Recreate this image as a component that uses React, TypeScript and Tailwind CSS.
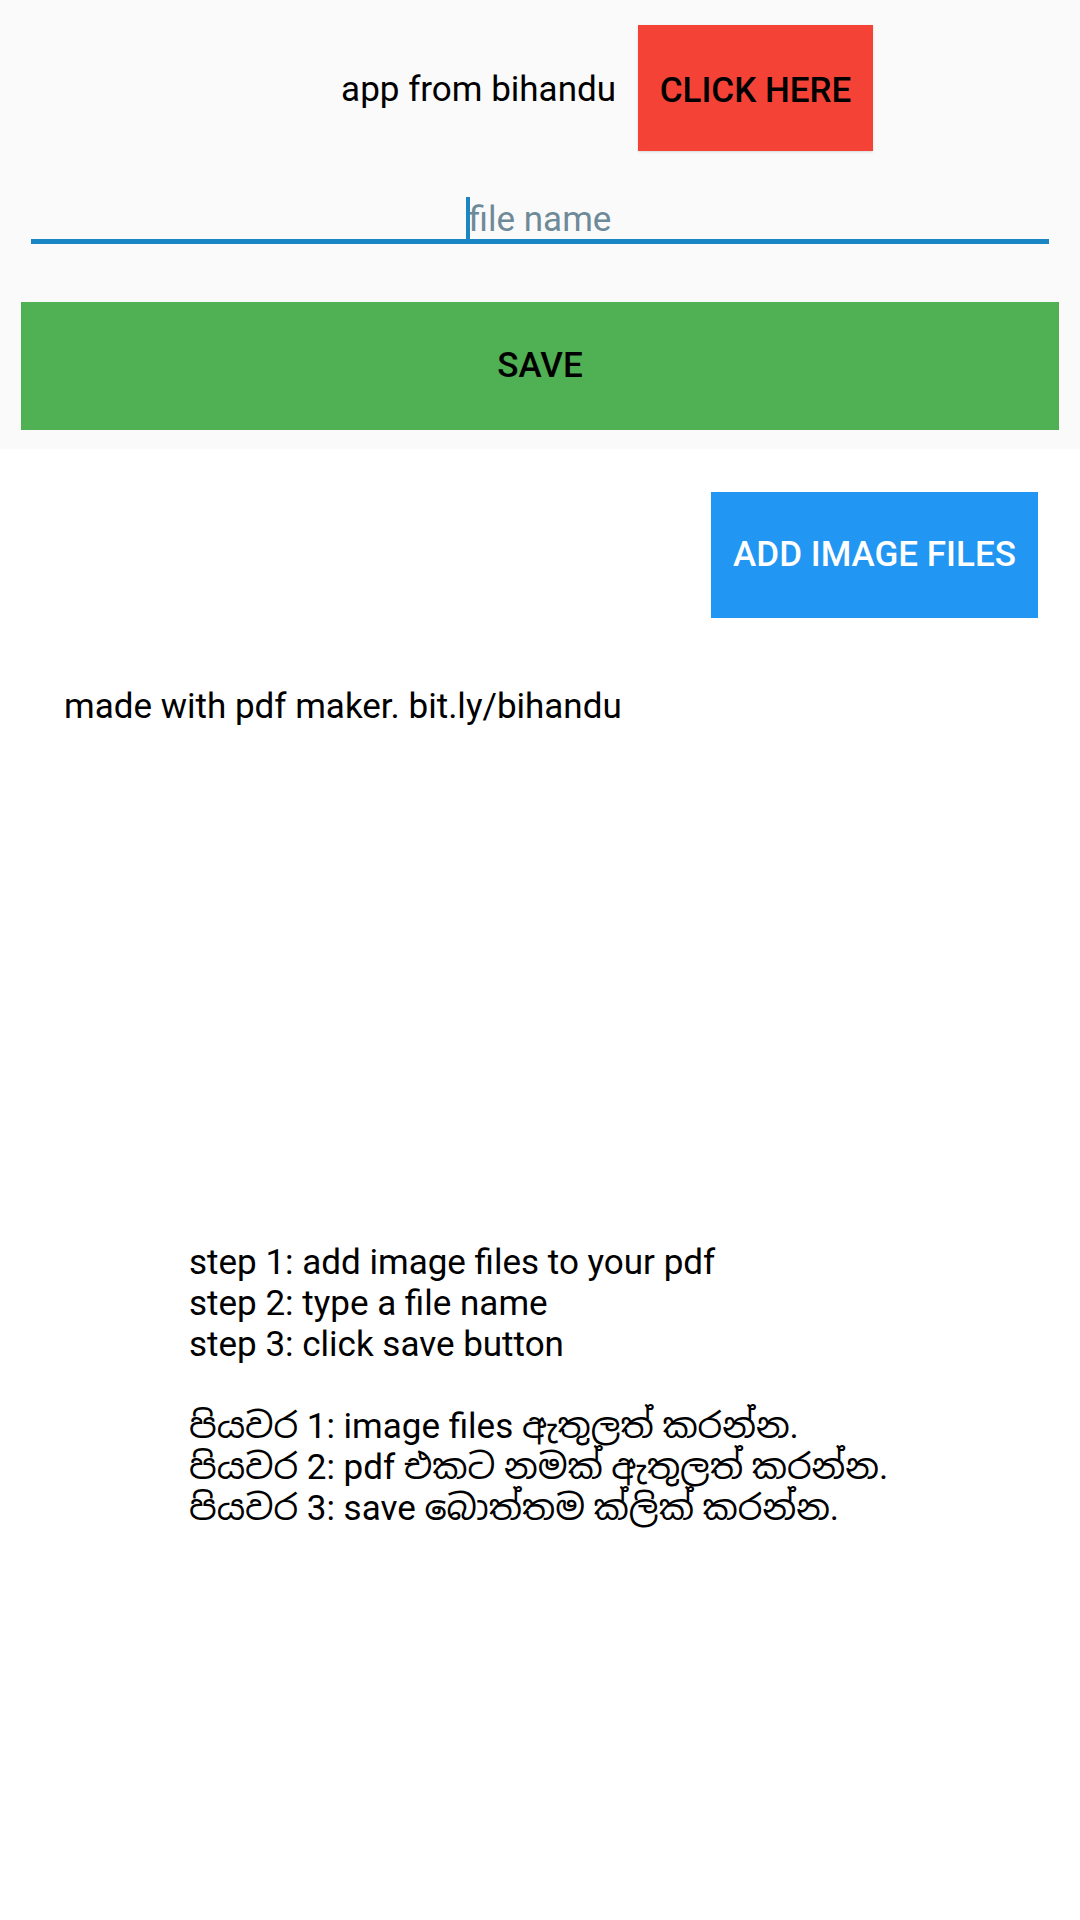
export default function App() {
  return (
    <div className="w-[1080px] h-[1920px] bg-white font-['Roboto','Noto_Sans','Noto_Sans_Sinhala',sans-serif] text-black">
      {/* top form */}
      <div className="bg-[#fafafa] h-[449px] pt-[25px]">
        <div className="flex items-center justify-end pr-[207px] gap-[22px]">
          <span className="text-[35px] leading-none pt-[2px]">app from bihandu</span>
          <button className="w-[235px] h-[126px] bg-[#f44336] text-[35px] font-medium uppercase shadow-sm pt-[6px]">
            CLICK HERE
          </button>
        </div>

        <div className="mx-[31px] mt-[13px] relative h-[80px] border-b-[5px] border-[#1a86c4] flex items-end justify-center">
          <div className="relative flex items-end pb-[2px]">
            <span className="absolute left-[-3px] bottom-[-4px] w-[4px] h-[46px] bg-[#1a86c4]" />
            <span className="text-[35px] leading-none text-[#6e8a98]">file name</span>
          </div>
        </div>

        <button className="mt-[58px] mx-[21px] w-[1038px] h-[128px] bg-[#50b054] text-[35px] font-medium">
          SAVE
        </button>
      </div>

      {/* add files */}
      <div className="flex justify-end pr-[42px] pt-[43px]">
        <button className="w-[327px] h-[126px] bg-[#2196f3] text-white text-[35px] font-medium">
          ADD IMAGE FILES
        </button>
      </div>

      <p className="pl-[64px] mt-[68px] text-[35px] leading-[41px]">made with pdf maker. bit.ly/bihandu</p>

      {/* steps */}
      <div className="pl-[189px] mt-[515px] text-[35px] leading-[41px]">
        <p>step 1: add image files to your pdf</p>
        <p>step 2: type a file name</p>
        <p>step 3: click save button</p>
        <p className="h-[41px]" />
        <p>පියවර 1: image files ඇතුලත් කරන්න.</p>
        <p>පියවර 2: pdf එකට නමක් ඇතුලත් කරන්න.</p>
        <p>පියවර 3: save බොත්තම ක්ලික් කරන්න.</p>
      </div>
    </div>
  );
}
